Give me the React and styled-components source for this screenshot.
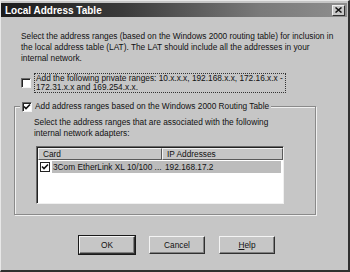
import React from "react";
import styled, { createGlobalStyle } from "styled-components";

const Global = createGlobalStyle`
  html, body { margin: 0; padding: 0; background: #c6c6c6; }
  body { font-family: "Liberation Sans", Arial, sans-serif; }
`;

const Window = styled.div`
  width: 350px;
  height: 272px;
  box-sizing: border-box;
  background: #c6c6c6;
  border-top: 1px solid #e8e8e8;
  border-left: 1px solid #e8e8e8;
  border-right: 2px solid #303030;
  border-bottom: 2px solid #303030;
  padding: 1px 1px 0 0;
  display: flex;
  flex-direction: column;
  font-size: 8.3px;
  color: #111;
`;

const TitleBar = styled.div`
  height: 14px;
  margin-top: 1px;
  background: linear-gradient(to right, #1c1c1c 0%, #3a3a3a 35%, #7a7a7a 75%, #8e8e8e 100%);
  display: flex;
  align-items: center;
  justify-content: space-between;
  padding: 0 2px 0 4px;
`;

const Title = styled.span`
  color: #fff;
  font-weight: bold;
  font-size: 10px;
`;

const CloseButton = styled.div`
  width: 13px;
  height: 11px;
  box-sizing: border-box;
  background: #c8c8c8;
  border-top: 1px solid #f0f0f0;
  border-left: 1px solid #f0f0f0;
  border-right: 1px solid #303030;
  border-bottom: 1px solid #303030;
  display: flex;
  align-items: center;
  justify-content: center;
`;

const Body = styled.div`
  flex: 1;
  display: flex;
  flex-direction: column;
  padding: 14px 0 0 12px;
`;

const Text = styled.p`
  margin: 0;
  line-height: 11px;
  white-space: nowrap;
  padding-left: ${(p) => p.$indent || 0}px;
`;

const CheckRow = styled.div`
  display: flex;
  align-items: center;
  gap: 3px;
  margin-top: ${(p) => p.$mt || 0}px;
  padding-left: ${(p) => p.$indent || 0}px;
`;

const Box = styled.div`
  width: 10px;
  height: 10px;
  flex: none;
  box-sizing: border-box;
  background: #fff;
  border-top: 1px solid #6a6a6a;
  border-left: 1px solid #6a6a6a;
  border-right: 1px solid #f4f4f4;
  border-bottom: 1px solid #f4f4f4;
  box-shadow: inset 1px 1px 0 #222;
  display: flex;
  align-items: center;
  justify-content: center;
`;

const FocusLabel = styled.div`
  flex: none;
  border: 1px dotted #333;
  padding: 0 2px 0 1px;
  line-height: 9px;
  white-space: nowrap;
`;

const Group = styled.div`
  position: relative;
  margin-top: 13px;
  margin-left: 1px;
  width: 302px;
  height: 109px;
  box-sizing: border-box;
  border: 1px solid #8a8a8a;
  box-shadow: 1px 1px 0 #f0f0f0, inset 1px 1px 0 #f0f0f0;
  padding: 10px 0 0 19px;
`;

const Legend = styled.div`
  position: absolute;
  top: -6px;
  left: 5px;
  background: #c6c6c6;
  padding: 0 2px;
  display: flex;
  align-items: center;
  gap: 3px;
  line-height: 11px;
`;

const ListView = styled.div`
  margin-top: 7px;
  margin-left: 2px;
  width: 248px;
  height: 58px;
  box-sizing: border-box;
  background: #fff;
  border-top: 1px solid #6a6a6a;
  border-left: 1px solid #6a6a6a;
  border-right: 1px solid #f0f0f0;
  border-bottom: 1px solid #f0f0f0;
  box-shadow: inset 1px 1px 0 #222;
  padding: 1px 0 0 1px;
`;

const HeaderRow = styled.div`
  display: grid;
  grid-template-columns: 124px 121px;
  height: 12px;
`;

const HeaderCell = styled.div`
  box-sizing: border-box;
  background: #c6c6c6;
  border-top: 1px solid #f4f4f4;
  border-left: 1px solid #f4f4f4;
  border-right: 1px solid #5a5a5a;
  border-bottom: 1px solid #5a5a5a;
  padding-left: 4px;
  line-height: 10px;
`;

const DataRow = styled.div`
  display: flex;
  align-items: center;
  gap: 2px;
  height: 12px;
  margin-top: 1px;
  padding-left: 2px;
`;

const Highlight = styled.div`
  flex: none;
  width: 229px;
  display: grid;
  grid-template-columns: 110px 1fr;
  height: 12px;
  align-items: center;
  background: ${(p) => (p.$selected ? "#bcbcbc" : "transparent")};
`;

const Cell = styled.div`
  padding-left: ${(p) => p.$pl || 1}px;
  white-space: nowrap;
  line-height: 12px;
`;

const SmallBox = styled.div`
  width: 10px;
  height: 10px;
  flex: none;
  box-sizing: border-box;
  background: #fff;
  border: 1px solid #222;
  display: flex;
  align-items: center;
  justify-content: center;
`;

const ButtonRow = styled.div`
  display: flex;
  gap: 14px;
  margin-top: 21px;
  margin-left: 66px;
`;

const Button = styled.div`
  width: 56px;
  height: 18px;
  box-sizing: border-box;
  background: #c6c6c6;
  border-top: 1px solid #f4f4f4;
  border-left: 1px solid #f4f4f4;
  border-right: 1px solid #303030;
  border-bottom: 1px solid #303030;
  box-shadow: ${(p) =>
    p.$default ? "0 0 0 1px #1a1a1a, inset -1px -1px 0 #808080" : "inset -1px -1px 0 #808080"};
  display: flex;
  align-items: center;
  justify-content: center;
  font-size: 8.3px;
  u { text-decoration: underline; }
`;

const Check = () => (
  <svg width="8" height="8" viewBox="0 0 8 8">
    <path d="M1 3.5 L3 5.5 L7 1.5" stroke="#111" strokeWidth="1.6" fill="none" />
  </svg>
);

export default function App() {
  return (
    <>
      <Global />
      <Window>
        <TitleBar>
          <Title>Local Address Table</Title>
          <CloseButton>
            <svg width="7" height="6" viewBox="0 0 7 6">
              <path d="M0.5 0.5 L6.5 5.5 M6.5 0.5 L0.5 5.5" stroke="#111" strokeWidth="1.5" />
            </svg>
          </CloseButton>
        </TitleBar>
        <Body>
          <Text $indent={8}>
            Select the address ranges (based on the Windows 2000 routing table) for inclusion in
            <br />
            the local address table (LAT). The LAT should include all the addresses in your
            <br />
            internal network.
          </Text>
          <CheckRow $mt={9} $indent={8}>
            <Box />
            <FocusLabel>
              Add the following private ranges: 10.x.x.x, 192.168.x.x, 172.16.x.x -
              <br />
              172.31.x.x and 169.254.x.x.
            </FocusLabel>
          </CheckRow>
          <Group>
            <Legend>
              <Box>
                <Check />
              </Box>
              <span>Add address ranges based on the Windows 2000 Routing Table</span>
            </Legend>
            <Text>
              Select the address ranges that are associated with the following
              <br />
              internal network adapters:
            </Text>
            <ListView>
              <HeaderRow>
                <HeaderCell>Card</HeaderCell>
                <HeaderCell>IP Addresses</HeaderCell>
              </HeaderRow>
              <DataRow>
                <SmallBox>
                  <Check />
                </SmallBox>
                <Highlight $selected>
                  <Cell>3Com EtherLink XL 10/100 ...</Cell>
                  <Cell $pl={3}>192.168.17.2</Cell>
                </Highlight>
              </DataRow>
            </ListView>
          </Group>
          <ButtonRow>
            <Button $default>OK</Button>
            <Button>Cancel</Button>
            <Button>
              <span>
                <u>H</u>elp
              </span>
            </Button>
          </ButtonRow>
        </Body>
      </Window>
    </>
  );
}
